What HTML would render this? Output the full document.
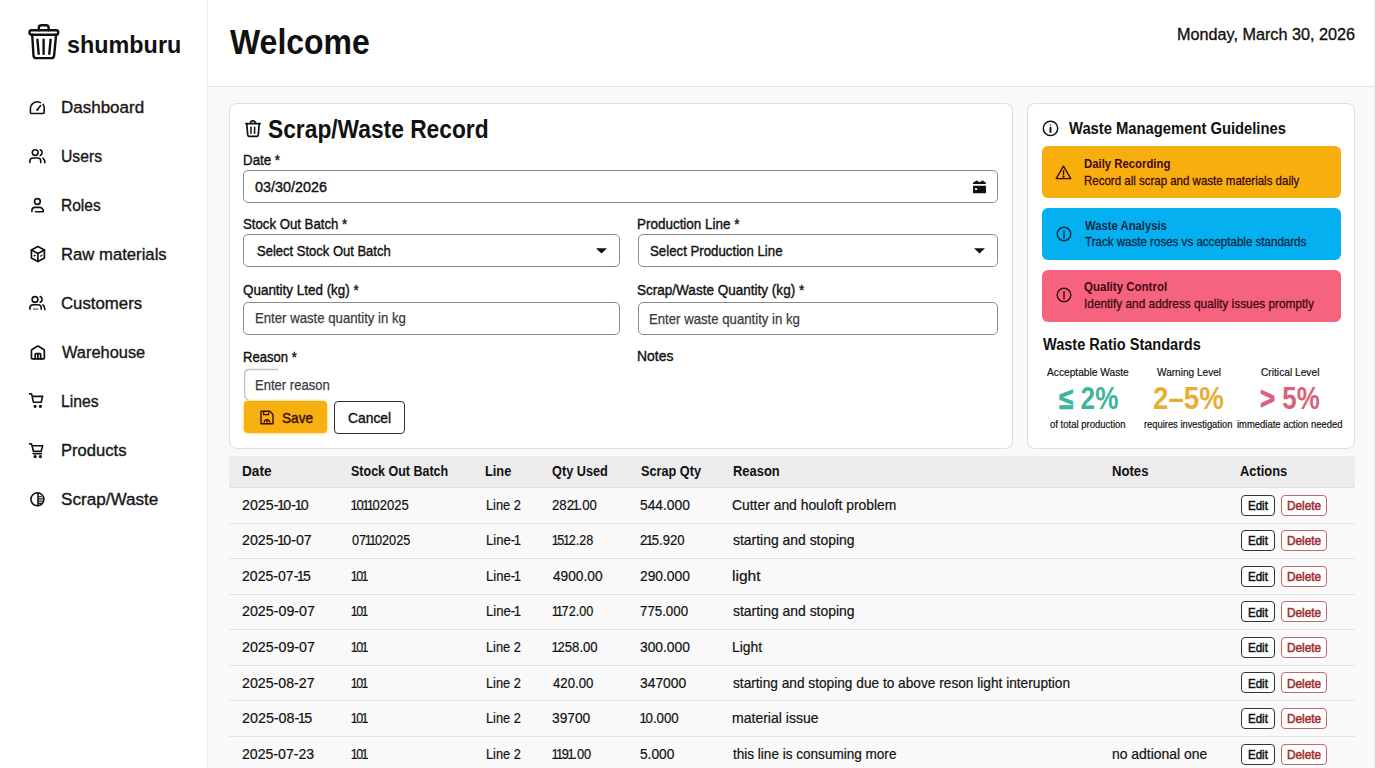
<!DOCTYPE html>
<html><head><meta charset="utf-8">
<style>
*{box-sizing:border-box;margin:0;padding:0}
html,body{width:1375px;height:768px;overflow:hidden;background:#f9f9f9;font-family:"Liberation Sans",sans-serif;color:#111}
.t{position:absolute;white-space:nowrap;line-height:1}
.ic{position:absolute}
#side{position:absolute;left:0;top:0;width:208px;height:768px;background:#fff;border-right:1px solid #ebebeb}
#head{position:absolute;left:208px;top:0;width:1167px;height:87px;background:#fff;border-bottom:1px solid #e5e5e5;border-right:1px solid #e8e8e8}
.card{position:absolute;background:#fff;border:1px solid #dedede;border-radius:8px}
.inp{position:absolute;border:1px solid #8c8c8c;border-radius:5px;background:#fff}
.gbox{position:absolute;left:1042px;width:298.5px;border-radius:6px}
.row{position:absolute;left:229px;width:1126px;height:1px;background:#e0e0e0}
.eb{position:absolute;left:1241px;width:34px;height:21px;border:1.3px solid #333;border-radius:4px;background:#fff}
.db{position:absolute;left:1281px;width:46px;height:21px;border:1.4px solid #bd6a6a;border-radius:4px;background:#fff}
</style></head><body>
<div id="side"></div><div id="head"></div>
<svg class="ic" style="left:27px;top:22px" width="34" height="39" viewBox="0 0 34 39" fill="none" stroke="#111" stroke-width="2.4" stroke-linecap="round" stroke-linejoin="round">
<path d="M11.8 8.2V5.8Q11.8 3.2 14.4 3.2H19Q21.6 3.2 21.6 5.8V8.2"/>
<rect x="2.5" y="8.3" width="28.7" height="4.4" rx="2"/>
<path d="M5.2 12.7L6.5 33.6Q6.7 36.1 9.2 36.1H24.4Q26.9 36.1 27.1 33.6L29.1 12.7"/>
<path d="M10.4 17.6L11.7 31.9M16.6 17.6V31.9M23.6 17.6L22.3 31.9"/>
</svg>
<div class="card" style="left:229px;top:103px;width:784px;height:345.8px"></div>
<div class="card" style="left:1027px;top:103px;width:328px;height:345.8px"></div>
<div class="inp" style="left:243px;top:170px;width:755px;height:33px"></div>
<div class="inp" style="left:243px;top:234px;width:377px;height:33px"></div>
<div class="inp" style="left:638px;top:234px;width:360px;height:33px"></div>
<div class="inp" style="left:243px;top:302px;width:377px;height:33px"></div>
<div class="inp" style="left:638px;top:302px;width:360px;height:33px"></div>
<svg class="ic" style="left:240px;top:365px" width="50" height="40" viewBox="0 0 50 40"><path d="M38 4.5H9.5Q4.6 4.5 4.6 9.4V29.6Q4.6 34.2 8.6 34.6" fill="none" stroke="#c2c2c2" stroke-width="1.3"/></svg>
<div style="position:absolute;left:244px;top:401px;width:83px;height:32px;background:#f7b00f;border-radius:4px;box-shadow:0 0 2px 1px rgba(252,220,120,0.8)"></div>
<div style="position:absolute;left:334px;top:401px;width:71px;height:33px;border:1px solid #2e2e2e;border-radius:4px;background:#fff"></div>
<div class="gbox" style="top:146px;height:52px;background:#f8ae0d"></div>
<div class="gbox" style="top:208px;height:51.5px;background:#04b0f0"></div>
<div class="gbox" style="top:270px;height:51.5px;background:#f5637e"></div>
<div style="position:absolute;left:229px;top:456px;width:1126px;height:31px;background:#ececec"></div>
<div class="row" style="top:487px"></div>
<div class="eb" style="top:494.60px"></div><div class="db" style="top:494.60px"></div>
<div class="row" style="top:522.57px"></div>
<div class="eb" style="top:530.17px"></div><div class="db" style="top:530.17px"></div>
<div class="row" style="top:558.14px"></div>
<div class="eb" style="top:565.74px"></div><div class="db" style="top:565.74px"></div>
<div class="row" style="top:593.71px"></div>
<div class="eb" style="top:601.31px"></div><div class="db" style="top:601.31px"></div>
<div class="row" style="top:629.28px"></div>
<div class="eb" style="top:636.88px"></div><div class="db" style="top:636.88px"></div>
<div class="row" style="top:664.85px"></div>
<div class="eb" style="top:672.45px"></div><div class="db" style="top:672.45px"></div>
<div class="row" style="top:700.42px"></div>
<div class="eb" style="top:708.02px"></div><div class="db" style="top:708.02px"></div>
<div class="row" style="top:735.99px"></div>
<div class="eb" style="top:743.59px"></div><div class="db" style="top:743.59px"></div><div style="position:absolute;left:1374px;top:0;width:1px;height:768px;background:#ececec"></div>

<!-- nav icons -->
<svg class="ic" style="left:28px;top:100px" width="19" height="16" viewBox="0 0 19 16" fill="none" stroke="#111" stroke-width="1.6" stroke-linecap="round" stroke-linejoin="round">
<path d="M15.1 4.4A6.9 6.9 0 0 1 16.2 8.6V12.3Q16.2 13.5 15 13.5H3.6Q2.4 13.5 2.4 12.3V8.8A6.9 6.9 0 0 1 12.4 2.6"/><path d="M9.5 9.6L12.7 5.6"/><circle cx="9.4" cy="9.8" r="1.15" fill="#111" stroke="none"/></svg>
<svg class="ic" style="left:28px;top:148px" width="19" height="17" viewBox="0 0 19 17" fill="none" stroke="#111" stroke-width="1.6" stroke-linecap="round" stroke-linejoin="round">
<circle cx="7.2" cy="4.6" r="2.9"/><path d="M1.9 14.6V13.2Q1.9 10 5.1 10H9.6Q12.8 10 12.8 13.2V14.6"/><path d="M12.2 1.8a3 3 0 0 1 0 5.6"/><path d="M15 10.2Q16.8 11.6 16.9 14.8"/></svg>
<svg class="ic" style="left:30px;top:196.5px" width="16" height="17" viewBox="0 0 16 17" fill="none" stroke="#111" stroke-width="1.6" stroke-linecap="round" stroke-linejoin="round">
<circle cx="7.4" cy="4.5" r="2.9"/><path d="M1.9 14.6V13.4Q1.9 10.4 5 10.4H9.8Q12 10.4 13 12.6L13.3 13.4Q13.8 14.8 12.4 14.8H5.6"/></svg>
<svg class="ic" style="left:28.5px;top:244.5px" width="18" height="18" viewBox="0 0 18 18" fill="none" stroke="#111" stroke-width="1.7" stroke-linecap="round" stroke-linejoin="round">
<path d="M8.9 1.6L15.4 5V12.9L8.9 16.4L2.4 12.9V5Z"/><path d="M2.4 5L8.9 8.6L15.4 5M8.9 8.6V16.4"/><circle cx="5.6" cy="10.6" r="0.6" fill="#111" stroke-width="0.8"/><path d="M11.6 11.2l1.4-1" stroke-width="1.2"/></svg>
<svg class="ic" style="left:28px;top:294.5px" width="19" height="17" viewBox="0 0 19 17" fill="none" stroke="#111" stroke-width="1.6" stroke-linecap="round" stroke-linejoin="round">
<circle cx="7" cy="4.5" r="2.9"/><path d="M1.9 14.3V12.9Q1.9 9.7 5.2 9.7H9.8Q13.2 9.7 13.2 12.9V14.3"/><path d="M5 14.1H10.2" stroke="#777" stroke-width="1.5" stroke-linecap="butt"/><path d="M12.2 1.6a3 3 0 0 1 0 5.6"/><path d="M15 9.9Q16.8 11.4 16.9 14.6"/></svg>
<svg class="ic" style="left:28.5px;top:343.5px" width="18" height="18" viewBox="0 0 18 18" fill="none" stroke="#111" stroke-width="1.7" stroke-linecap="round" stroke-linejoin="round">
<path d="M2.45 6.6Q2.45 5.9 3.1 5.5L8.3 2.3Q8.9 1.95 9.5 2.3L14.7 5.5Q15.35 5.9 15.35 6.6V13.9Q15.35 14.85 14.4 14.85H3.4Q2.45 14.85 2.45 13.9Z"/><path d="M6.15 14.85V10.3Q6.15 9.55 6.9 9.55H10.9Q11.65 9.55 11.65 10.3V14.85M8.9 9.55V14.85"/></svg>
<svg class="ic" style="left:28px;top:392px" width="17" height="16" viewBox="0 0 17 16" fill="none" stroke="#111" stroke-width="1.6" stroke-linecap="round" stroke-linejoin="round">
<path d="M1.6 1.9H2.8Q3.6 1.9 3.8 2.7L5.4 10.2H13.2L14.6 4.4H4.2"/><circle cx="7.1" cy="14.3" r="0.8" fill="#111"/><circle cx="12.4" cy="14.3" r="0.8" fill="#111"/></svg>
<svg class="ic" style="left:28px;top:441.5px" width="17" height="17" viewBox="0 0 17 17" fill="none" stroke="#111" stroke-width="1.6" stroke-linecap="round" stroke-linejoin="round">
<path d="M1.6 1.9H2.8Q3.6 1.9 3.8 2.7L5.4 9.3H13.2L14.6 3.7H4.2"/><path d="M5.2 11.6H13.4"/><circle cx="7.1" cy="14.6" r="0.85" fill="#111"/><circle cx="12.4" cy="14.6" r="0.85" fill="#111"/></svg>
<svg class="ic" style="left:28.5px;top:491px" width="17" height="17" viewBox="0 0 17 17" fill="none" stroke="#111" stroke-width="1.6" stroke-linecap="round" stroke-linejoin="round">
<circle cx="8.4" cy="8.3" r="6.5"/><path d="M9 1.9V14.7"/><path d="M9.8 5.6H12.4M9.8 7.3H13.4M9.8 9H13.6M9.8 10.8H13.2M9.8 12.5H12.2" stroke-width="0.9"/></svg>

<!-- title trash -->
<svg class="ic" style="left:244px;top:119px" width="18" height="19" viewBox="0 0 18 19" fill="none" stroke="#111" stroke-width="1.7" stroke-linecap="round" stroke-linejoin="round">
<path d="M6.6 4.2C6.6 2.6 7.6 1.9 9 1.9S11.4 2.6 11.4 4.2"/><path d="M1.8 4.6H16.2"/><path d="M2.8 4.8L3.7 15.8Q3.9 17.4 5.4 17.4H12.6Q14.1 17.4 14.3 15.8L15.2 4.8"/><path d="M7 8.2V14.2M10.6 8.2V14.2" stroke-width="1.5"/></svg>
<!-- calendar -->
<svg class="ic" style="left:973px;top:179.5px" width="13" height="14" viewBox="0 0 13 14">
<circle cx="3.6" cy="1.9" r="1.35" fill="#111"/><circle cx="9.5" cy="1.9" r="1.35" fill="#111"/>
<path d="M0 3.4Q0 1.8 1.6 1.8H11.4Q13 1.8 13 3.4V4H0Z" fill="#111"/>
<path d="M0 5.7H13V12.4Q13 13.3 12.1 13.3H0.9Q0 13.3 0 12.4Z" fill="#111"/><rect x="2" y="8.2" width="2.2" height="1.9" rx="0.4" fill="#fff"/></svg>
<!-- carets -->
<svg class="ic" style="left:595.5px;top:248px" width="11" height="6" viewBox="0 0 11 6"><path d="M0 0.3H11L5.5 5.6Z" fill="#111"/></svg>
<svg class="ic" style="left:974px;top:248px" width="11" height="6" viewBox="0 0 11 6"><path d="M0 0.3H11L5.5 5.6Z" fill="#111"/></svg>
<!-- save icon -->
<svg class="ic" style="left:259.5px;top:409.5px" width="14" height="15" viewBox="0 0 14 15" fill="none" stroke="#3d0a10" stroke-width="1.4" stroke-linejoin="round">
<path d="M1 1.2H9.8L13 4.4V13.8H1Z"/><path d="M3.6 1.2V4.6H8.6V2.6"/><path d="M4.2 12.6A2.8 2.8 0 1 1 9.8 12.6"/><path d="M7 10.4V12.8"/></svg>
<!-- info icon card 2 -->
<svg class="ic" style="left:1042px;top:120px" width="17" height="17" viewBox="0 0 17 17" fill="none" stroke="#111" stroke-width="1.5" stroke-linecap="round">
<circle cx="8.5" cy="8.4" r="7.2"/><path d="M8.5 7.6V12" stroke-width="1.9"/><circle cx="8.5" cy="4.9" r="0.7" fill="#111" stroke="none"/></svg>
<!-- guideline icons -->
<svg class="ic" style="left:1055px;top:165px" width="17" height="15" viewBox="0 0 17 15" fill="none" stroke="#3d0a10" stroke-width="1.4" stroke-linejoin="round" stroke-linecap="round">
<path d="M8.5 1.2L15.8 13.6H1.2Z"/><path d="M8.5 5.6V9.6"/><circle cx="8.5" cy="11.6" r="0.5" fill="#3d0a10"/></svg>
<svg class="ic" style="left:1055.5px;top:226px" width="16" height="16" viewBox="0 0 16 16" fill="none" stroke="#0b2f4a" stroke-width="1.4" stroke-linecap="round">
<circle cx="8" cy="8" r="6.8"/><path d="M8 5V10.5"/><circle cx="8" cy="11.6" r="0.4" fill="#0b2f4a"/></svg>
<svg class="ic" style="left:1055.5px;top:287px" width="16" height="16" viewBox="0 0 16 16" fill="none" stroke="#3d0a10" stroke-width="1.4" stroke-linecap="round">
<circle cx="8" cy="8" r="6.8"/><path d="M8 4.6V9.6"/><circle cx="8" cy="11.3" r="0.4" fill="#3d0a10"/></svg>


<div class="t" style="left:67.03px;top:32.68px;font-size:24px;font-weight:700;color:#111;transform:scaleX(0.9739);transform-origin:0 0;">shumburu</div>
<div class="t" style="left:230.00px;top:24.80px;font-size:34.5px;font-weight:700;color:#111;transform:scaleX(0.9267);transform-origin:0 0;">Welcome</div>
<div class="t" style="left:1177.07px;top:26.27px;font-size:17.4px;font-weight:400;color:#111;transform:scaleX(0.9316);transform-origin:0 0;-webkit-text-stroke-width:0.35px;">Monday, March 30, 2026</div>
<div class="t" style="left:60.99px;top:99.78px;font-size:16.8px;font-weight:400;color:#161616;transform:scaleX(1.0125);transform-origin:0 0;-webkit-text-stroke-width:0.35px;">Dashboard</div>
<div class="t" style="left:61.06px;top:148.78px;font-size:16.8px;font-weight:400;color:#161616;transform:scaleX(0.9372);transform-origin:0 0;-webkit-text-stroke-width:0.35px;">Users</div>
<div class="t" style="left:61.07px;top:197.78px;font-size:16.8px;font-weight:400;color:#161616;transform:scaleX(0.9262);transform-origin:0 0;-webkit-text-stroke-width:0.35px;">Roles</div>
<div class="t" style="left:61.01px;top:246.78px;font-size:16.8px;font-weight:400;color:#161616;transform:scaleX(0.9943);transform-origin:0 0;-webkit-text-stroke-width:0.35px;">Raw materials</div>
<div class="t" style="left:61.00px;top:295.78px;font-size:16.8px;font-weight:400;color:#161616;-webkit-text-stroke-width:0.35px;">Customers</div>
<div class="t" style="left:62.00px;top:344.78px;font-size:16.8px;font-weight:400;color:#161616;transform:scaleX(0.9765);transform-origin:0 0;-webkit-text-stroke-width:0.35px;">Warehouse</div>
<div class="t" style="left:61.06px;top:393.78px;font-size:16.8px;font-weight:400;color:#161616;transform:scaleX(0.9385);transform-origin:0 0;-webkit-text-stroke-width:0.35px;">Lines</div>
<div class="t" style="left:61.01px;top:442.78px;font-size:16.8px;font-weight:400;color:#161616;transform:scaleX(0.9892);transform-origin:0 0;-webkit-text-stroke-width:0.35px;">Products</div>
<div class="t" style="left:60.98px;top:491.78px;font-size:16.8px;font-weight:400;color:#161616;transform:scaleX(1.0202);transform-origin:0 0;-webkit-text-stroke-width:0.35px;">Scrap/Waste</div>
<div class="t" style="left:268.09px;top:116.84px;font-size:25px;font-weight:700;color:#111;transform:scaleX(0.9108);transform-origin:0 0;">Scrap/Waste Record</div>
<div class="t" style="left:243.12px;top:152.13px;font-size:15.2px;font-weight:400;color:#111;transform:scaleX(0.8780);transform-origin:0 0;-webkit-text-stroke-width:0.4px;">Date *</div>
<div class="t" style="left:255.00px;top:178.73px;font-size:15.2px;font-weight:400;color:#111;transform:scaleX(0.9474);transform-origin:0 0;-webkit-text-stroke-width:0.4px;">03/30/2026</div>
<div class="t" style="left:243.13px;top:216.13px;font-size:15.2px;font-weight:400;color:#111;transform:scaleX(0.8689);transform-origin:0 0;-webkit-text-stroke-width:0.4px;">Stock Out Batch *</div>
<div class="t" style="left:257.44px;top:243.13px;font-size:15.2px;font-weight:400;color:#111;transform:scaleX(0.8561);transform-origin:0 0;-webkit-text-stroke-width:0.4px;">Select Stock Out Batch</div>
<div class="t" style="left:637.11px;top:216.13px;font-size:15.2px;font-weight:400;color:#111;transform:scaleX(0.8860);transform-origin:0 0;-webkit-text-stroke-width:0.4px;">Production Line *</div>
<div class="t" style="left:650.13px;top:243.13px;font-size:15.2px;font-weight:400;color:#111;transform:scaleX(0.8722);transform-origin:0 0;-webkit-text-stroke-width:0.4px;">Select Production Line</div>
<div class="t" style="left:243.12px;top:282.13px;font-size:15.2px;font-weight:400;color:#111;transform:scaleX(0.8846);transform-origin:0 0;-webkit-text-stroke-width:0.4px;">Quantity Lted (kg) *</div>
<div class="t" style="left:254.53px;top:310.13px;font-size:15.2px;font-weight:400;color:#3a3a3a;transform:scaleX(0.8680);transform-origin:0 0;-webkit-text-stroke-width:0.25px;">Enter waste quantity in kg</div>
<div class="t" style="left:637.11px;top:282.13px;font-size:15.2px;font-weight:400;color:#111;transform:scaleX(0.8909);transform-origin:0 0;-webkit-text-stroke-width:0.4px;">Scrap/Waste Quantity (kg) *</div>
<div class="t" style="left:648.83px;top:310.63px;font-size:15.2px;font-weight:400;color:#3a3a3a;transform:scaleX(0.8680);transform-origin:0 0;-webkit-text-stroke-width:0.25px;">Enter waste quantity in kg</div>
<div class="t" style="left:243.14px;top:348.83px;font-size:15.2px;font-weight:400;color:#111;transform:scaleX(0.8623);transform-origin:0 0;-webkit-text-stroke-width:0.4px;">Reason *</div>
<div class="t" style="left:637.08px;top:348.33px;font-size:15.2px;font-weight:400;color:#111;transform:scaleX(0.9158);transform-origin:0 0;-webkit-text-stroke-width:0.4px;">Notes</div>
<div class="t" style="left:254.84px;top:376.53px;font-size:15.2px;font-weight:400;color:#3a3a3a;transform:scaleX(0.8600);transform-origin:0 0;-webkit-text-stroke-width:0.25px;">Enter reason</div>
<div class="t" style="left:282.09px;top:409.60px;font-size:15px;font-weight:400;color:#3d0a10;transform:scaleX(0.9091);transform-origin:0 0;-webkit-text-stroke-width:0.4px;">Save</div>
<div class="t" style="left:348.08px;top:409.60px;font-size:15px;font-weight:400;color:#111;transform:scaleX(0.9222);transform-origin:0 0;-webkit-text-stroke-width:0.4px;">Cancel</div>
<div class="t" style="left:1069.40px;top:120.31px;font-size:17px;font-weight:700;color:#111;transform:scaleX(0.8687);transform-origin:0 0;-webkit-text-stroke-width:0px;">Waste Management Guidelines</div>
<div class="t" style="left:1083.63px;top:157.20px;font-size:13px;font-weight:700;color:#3d0a10;transform:scaleX(0.8722);transform-origin:0 0;">Daily Recording</div>
<div class="t" style="left:1083.62px;top:173.50px;font-size:13px;font-weight:400;color:#3d0a10;transform:scaleX(0.8840);transform-origin:0 0;-webkit-text-stroke-width:0.3px;">Record all scrap and waste materials daily</div>
<div class="t" style="left:1084.50px;top:218.80px;font-size:13px;font-weight:700;color:#0b2a45;transform:scaleX(0.8670);transform-origin:0 0;">Waste Analysis</div>
<div class="t" style="left:1084.50px;top:234.80px;font-size:13px;font-weight:400;color:#0b2a45;transform:scaleX(0.8896);transform-origin:0 0;-webkit-text-stroke-width:0.3px;">Track waste roses vs acceptable standards</div>
<div class="t" style="left:1083.61px;top:280.40px;font-size:13px;font-weight:700;color:#3d0a10;transform:scaleX(0.8859);transform-origin:0 0;">Quality Control</div>
<div class="t" style="left:1083.59px;top:296.70px;font-size:13px;font-weight:400;color:#3d0a10;transform:scaleX(0.9116);transform-origin:0 0;-webkit-text-stroke-width:0.3px;">Identify and address quality issues promptly</div>
<div class="t" style="left:1042.70px;top:336.58px;font-size:16.8px;font-weight:700;color:#111;transform:scaleX(0.8663);transform-origin:0 0;">Waste Ratio Standards</div>
<div class="t" style="left:1047.20px;top:366.63px;font-size:11.3px;font-weight:400;color:#111;transform:scaleX(0.9022);transform-origin:0 0;-webkit-text-stroke-width:0.2px;">Acceptable Waste</div>
<div class="t" style="left:1156.60px;top:366.63px;font-size:11.3px;font-weight:400;color:#111;transform:scaleX(0.8930);transform-origin:0 0;-webkit-text-stroke-width:0.2px;">Warning Level</div>
<div class="t" style="left:1260.60px;top:366.63px;font-size:11.3px;font-weight:400;color:#111;transform:scaleX(0.9031);transform-origin:0 0;-webkit-text-stroke-width:0.2px;">Critical Level</div>
<div class="t" style="left:1058.50px;top:383.38px;font-size:30.5px;font-weight:700;color:#3fb39b;transform:scaleX(0.8565);transform-origin:0 0;"><span style="-webkit-text-stroke-width:0.7px">≤</span> 2%</div>
<div class="t" style="left:1153.29px;top:383.38px;font-size:30.5px;font-weight:700;color:#e8ae32;transform:scaleX(0.9079);transform-origin:0 0;">2–5%</div>
<div class="t" style="left:1259.75px;top:383.38px;font-size:30.5px;font-weight:700;color:#d9627b;transform:scaleX(0.8493);transform-origin:0 0;"><span style="-webkit-text-stroke-width:0.8px">&gt;</span> 5%</div>
<div class="t" style="left:1050.00px;top:419.03px;font-size:10.6px;font-weight:400;color:#111;transform:scaleX(0.8976);transform-origin:0 0;-webkit-text-stroke-width:0.2px;">of total production</div>
<div class="t" style="left:1143.72px;top:419.03px;font-size:10.6px;font-weight:400;color:#111;transform:scaleX(0.8828);transform-origin:0 0;-webkit-text-stroke-width:0.2px;">requires investigation</div>
<div class="t" style="left:1236.51px;top:419.03px;font-size:10.6px;font-weight:400;color:#111;transform:scaleX(0.8906);transform-origin:0 0;-webkit-text-stroke-width:0.2px;">immediate action needed</div>
<div class="t" style="left:241.91px;top:465.32px;font-size:13.8px;font-weight:700;color:#111;transform:scaleX(0.9897);transform-origin:0 0;">Date</div>
<div class="t" style="left:351.09px;top:465.32px;font-size:13.8px;font-weight:700;color:#111;transform:scaleX(0.9057);transform-origin:0 0;">Stock Out Batch</div>
<div class="t" style="left:485.27px;top:465.32px;font-size:13.8px;font-weight:700;color:#111;transform:scaleX(0.9259);transform-origin:0 0;">Line</div>
<div class="t" style="left:552.08px;top:465.32px;font-size:13.8px;font-weight:700;color:#111;transform:scaleX(0.9220);transform-origin:0 0;">Qty Used</div>
<div class="t" style="left:640.88px;top:465.32px;font-size:13.8px;font-weight:700;color:#111;transform:scaleX(0.9203);transform-origin:0 0;">Scrap Qty</div>
<div class="t" style="left:732.56px;top:465.32px;font-size:13.8px;font-weight:700;color:#111;transform:scaleX(0.9375);transform-origin:0 0;">Reason</div>
<div class="t" style="left:1111.85px;top:465.32px;font-size:13.8px;font-weight:700;color:#111;transform:scaleX(0.9514);transform-origin:0 0;">Notes</div>
<div class="t" style="left:1240.37px;top:465.32px;font-size:13.8px;font-weight:700;color:#111;transform:scaleX(0.9327);transform-origin:0 0;">Actions</div>
<div class="t" style="left:241.54px;top:497.77px;font-size:14.8px;font-weight:400;color:#111;transform:scaleX(0.9618);transform-origin:0 0;-webkit-text-stroke-width:0.2px;">2025-<span style="margin-left:-1.6px;letter-spacing:-1.6px">1</span>0-<span style="margin-left:-1.6px;letter-spacing:-1.6px">1</span>0</div>
<div class="t" style="left:352.00px;top:497.77px;font-size:14.8px;font-weight:400;color:#111;transform:scaleX(0.8797);transform-origin:0 0;-webkit-text-stroke-width:0.2px;"><span style="margin-left:-1.6px;letter-spacing:-1.6px">1</span>0<span style="margin-left:-1.6px;letter-spacing:-1.6px">1</span><span style="margin-left:-1.6px;letter-spacing:-1.6px">1</span>02025</div>
<div class="t" style="left:485.64px;top:497.77px;font-size:14.8px;font-weight:400;color:#111;transform:scaleX(0.8641);transform-origin:0 0;-webkit-text-stroke-width:0.2px;">Line 2</div>
<div class="t" style="left:552.11px;top:497.77px;font-size:14.8px;font-weight:400;color:#111;transform:scaleX(0.8918);transform-origin:0 0;-webkit-text-stroke-width:0.2px;">282<span style="margin-left:-1.6px;letter-spacing:-1.6px">1</span>.00</div>
<div class="t" style="left:640.37px;top:497.77px;font-size:14.8px;font-weight:400;color:#111;transform:scaleX(0.9327);transform-origin:0 0;-webkit-text-stroke-width:0.2px;">544.000</div>
<div class="t" style="left:732.06px;top:497.77px;font-size:14.8px;font-weight:400;color:#111;transform:scaleX(0.9382);transform-origin:0 0;-webkit-text-stroke-width:0.2px;">Cutter and houloft problem</div>
<div class="t" style="left:1247.56px;top:499.79px;font-size:12.3px;font-weight:400;color:#111;transform:scaleX(0.9381);transform-origin:0 0;-webkit-text-stroke-width:0.5px;">Edit</div>
<div class="t" style="left:1286.94px;top:499.79px;font-size:12.3px;font-weight:400;color:#9e2c2c;transform:scaleX(0.9618);transform-origin:0 0;-webkit-text-stroke-width:0.5px;">Delete</div>
<div class="t" style="left:241.54px;top:533.34px;font-size:14.8px;font-weight:400;color:#111;transform:scaleX(0.9620);transform-origin:0 0;-webkit-text-stroke-width:0.2px;">2025-<span style="margin-left:-1.6px;letter-spacing:-1.6px">1</span>0-07</div>
<div class="t" style="left:352.00px;top:533.34px;font-size:14.8px;font-weight:400;color:#111;transform:scaleX(0.8627);transform-origin:0 0;-webkit-text-stroke-width:0.2px;">07<span style="margin-left:-1.6px;letter-spacing:-1.6px">1</span><span style="margin-left:-1.6px;letter-spacing:-1.6px">1</span>02025</div>
<div class="t" style="left:485.61px;top:533.34px;font-size:14.8px;font-weight:400;color:#111;transform:scaleX(0.8868);transform-origin:0 0;-webkit-text-stroke-width:0.2px;">Line-<span style="margin-left:-1.6px;letter-spacing:-1.6px">1</span></div>
<div class="t" style="left:553.00px;top:533.34px;font-size:14.8px;font-weight:400;color:#111;transform:scaleX(0.8532);transform-origin:0 0;-webkit-text-stroke-width:0.2px;"><span style="margin-left:-1.6px;letter-spacing:-1.6px">1</span>5<span style="margin-left:-1.6px;letter-spacing:-1.6px">1</span>2.28</div>
<div class="t" style="left:640.41px;top:533.34px;font-size:14.8px;font-weight:400;color:#111;transform:scaleX(0.8857);transform-origin:0 0;-webkit-text-stroke-width:0.2px;">2<span style="margin-left:-1.6px;letter-spacing:-1.6px">1</span>5.920</div>
<div class="t" style="left:733.00px;top:533.34px;font-size:14.8px;font-weight:400;color:#111;transform:scaleX(0.9411);transform-origin:0 0;-webkit-text-stroke-width:0.2px;">starting and stoping</div>
<div class="t" style="left:1247.56px;top:535.36px;font-size:12.3px;font-weight:400;color:#111;transform:scaleX(0.9381);transform-origin:0 0;-webkit-text-stroke-width:0.5px;">Edit</div>
<div class="t" style="left:1286.94px;top:535.36px;font-size:12.3px;font-weight:400;color:#9e2c2c;transform:scaleX(0.9618);transform-origin:0 0;-webkit-text-stroke-width:0.5px;">Delete</div>
<div class="t" style="left:241.55px;top:568.91px;font-size:14.8px;font-weight:400;color:#111;transform:scaleX(0.9507);transform-origin:0 0;-webkit-text-stroke-width:0.2px;">2025-07-<span style="margin-left:-1.6px;letter-spacing:-1.6px">1</span>5</div>
<div class="t" style="left:352.00px;top:568.91px;font-size:14.8px;font-weight:400;color:#111;transform:scaleX(0.8400);transform-origin:0 0;letter-spacing:-0.238px;-webkit-text-stroke-width:0.2px;"><span style="margin-left:-1.6px;letter-spacing:-1.6px">1</span>0<span style="margin-left:-1.6px;letter-spacing:-1.6px">1</span></div>
<div class="t" style="left:485.61px;top:568.91px;font-size:14.8px;font-weight:400;color:#111;transform:scaleX(0.8868);transform-origin:0 0;-webkit-text-stroke-width:0.2px;">Line-<span style="margin-left:-1.6px;letter-spacing:-1.6px">1</span></div>
<div class="t" style="left:553.00px;top:568.91px;font-size:14.8px;font-weight:400;color:#111;transform:scaleX(0.9264);transform-origin:0 0;-webkit-text-stroke-width:0.2px;">4900.00</div>
<div class="t" style="left:640.37px;top:568.91px;font-size:14.8px;font-weight:400;color:#111;transform:scaleX(0.9327);transform-origin:0 0;-webkit-text-stroke-width:0.2px;">290.000</div>
<div class="t" style="left:731.95px;top:568.91px;font-size:14.8px;font-weight:400;color:#111;transform:scaleX(1.0538);transform-origin:0 0;-webkit-text-stroke-width:0.2px;">light</div>
<div class="t" style="left:1247.56px;top:570.93px;font-size:12.3px;font-weight:400;color:#111;transform:scaleX(0.9381);transform-origin:0 0;-webkit-text-stroke-width:0.5px;">Edit</div>
<div class="t" style="left:1286.94px;top:570.93px;font-size:12.3px;font-weight:400;color:#9e2c2c;transform:scaleX(0.9618);transform-origin:0 0;-webkit-text-stroke-width:0.5px;">Delete</div>
<div class="t" style="left:241.54px;top:604.48px;font-size:14.8px;font-weight:400;color:#111;transform:scaleX(0.9635);transform-origin:0 0;-webkit-text-stroke-width:0.2px;">2025-09-07</div>
<div class="t" style="left:352.00px;top:604.48px;font-size:14.8px;font-weight:400;color:#111;transform:scaleX(0.8400);transform-origin:0 0;letter-spacing:-0.238px;-webkit-text-stroke-width:0.2px;"><span style="margin-left:-1.6px;letter-spacing:-1.6px">1</span>0<span style="margin-left:-1.6px;letter-spacing:-1.6px">1</span></div>
<div class="t" style="left:485.61px;top:604.48px;font-size:14.8px;font-weight:400;color:#111;transform:scaleX(0.8868);transform-origin:0 0;-webkit-text-stroke-width:0.2px;">Line-<span style="margin-left:-1.6px;letter-spacing:-1.6px">1</span></div>
<div class="t" style="left:553.00px;top:604.48px;font-size:14.8px;font-weight:400;color:#111;transform:scaleX(0.8532);transform-origin:0 0;-webkit-text-stroke-width:0.2px;"><span style="margin-left:-1.6px;letter-spacing:-1.6px">1</span><span style="margin-left:-1.6px;letter-spacing:-1.6px">1</span>72.00</div>
<div class="t" style="left:640.40px;top:604.48px;font-size:14.8px;font-weight:400;color:#111;transform:scaleX(0.8981);transform-origin:0 0;-webkit-text-stroke-width:0.2px;">775.000</div>
<div class="t" style="left:733.00px;top:604.48px;font-size:14.8px;font-weight:400;color:#111;transform:scaleX(0.9411);transform-origin:0 0;-webkit-text-stroke-width:0.2px;">starting and stoping</div>
<div class="t" style="left:1247.56px;top:606.50px;font-size:12.3px;font-weight:400;color:#111;transform:scaleX(0.9381);transform-origin:0 0;-webkit-text-stroke-width:0.5px;">Edit</div>
<div class="t" style="left:1286.94px;top:606.50px;font-size:12.3px;font-weight:400;color:#9e2c2c;transform:scaleX(0.9618);transform-origin:0 0;-webkit-text-stroke-width:0.5px;">Delete</div>
<div class="t" style="left:241.54px;top:640.05px;font-size:14.8px;font-weight:400;color:#111;transform:scaleX(0.9635);transform-origin:0 0;-webkit-text-stroke-width:0.2px;">2025-09-07</div>
<div class="t" style="left:352.00px;top:640.05px;font-size:14.8px;font-weight:400;color:#111;transform:scaleX(0.8400);transform-origin:0 0;letter-spacing:-0.238px;-webkit-text-stroke-width:0.2px;"><span style="margin-left:-1.6px;letter-spacing:-1.6px">1</span>0<span style="margin-left:-1.6px;letter-spacing:-1.6px">1</span></div>
<div class="t" style="left:485.64px;top:640.05px;font-size:14.8px;font-weight:400;color:#111;transform:scaleX(0.8641);transform-origin:0 0;-webkit-text-stroke-width:0.2px;">Line 2</div>
<div class="t" style="left:553.00px;top:640.05px;font-size:14.8px;font-weight:400;color:#111;transform:scaleX(0.8880);transform-origin:0 0;-webkit-text-stroke-width:0.2px;"><span style="margin-left:-1.6px;letter-spacing:-1.6px">1</span>258.00</div>
<div class="t" style="left:640.37px;top:640.05px;font-size:14.8px;font-weight:400;color:#111;transform:scaleX(0.9327);transform-origin:0 0;-webkit-text-stroke-width:0.2px;">300.000</div>
<div class="t" style="left:732.06px;top:640.05px;font-size:14.8px;font-weight:400;color:#111;transform:scaleX(0.9419);transform-origin:0 0;-webkit-text-stroke-width:0.2px;">Light</div>
<div class="t" style="left:1247.56px;top:642.07px;font-size:12.3px;font-weight:400;color:#111;transform:scaleX(0.9381);transform-origin:0 0;-webkit-text-stroke-width:0.5px;">Edit</div>
<div class="t" style="left:1286.94px;top:642.07px;font-size:12.3px;font-weight:400;color:#9e2c2c;transform:scaleX(0.9618);transform-origin:0 0;-webkit-text-stroke-width:0.5px;">Delete</div>
<div class="t" style="left:241.54px;top:675.62px;font-size:14.8px;font-weight:400;color:#111;transform:scaleX(0.9581);transform-origin:0 0;-webkit-text-stroke-width:0.2px;">2025-08-27</div>
<div class="t" style="left:352.00px;top:675.62px;font-size:14.8px;font-weight:400;color:#111;transform:scaleX(0.8400);transform-origin:0 0;letter-spacing:-0.238px;-webkit-text-stroke-width:0.2px;"><span style="margin-left:-1.6px;letter-spacing:-1.6px">1</span>0<span style="margin-left:-1.6px;letter-spacing:-1.6px">1</span></div>
<div class="t" style="left:485.64px;top:675.62px;font-size:14.8px;font-weight:400;color:#111;transform:scaleX(0.8641);transform-origin:0 0;-webkit-text-stroke-width:0.2px;">Line 2</div>
<div class="t" style="left:553.00px;top:675.62px;font-size:14.8px;font-weight:400;color:#111;transform:scaleX(0.8911);transform-origin:0 0;-webkit-text-stroke-width:0.2px;">420.00</div>
<div class="t" style="left:640.36px;top:675.62px;font-size:14.8px;font-weight:400;color:#111;transform:scaleX(0.9354);transform-origin:0 0;-webkit-text-stroke-width:0.2px;">347000</div>
<div class="t" style="left:733.00px;top:675.62px;font-size:14.8px;font-weight:400;color:#111;transform:scaleX(0.9250);transform-origin:0 0;-webkit-text-stroke-width:0.2px;">starting and stoping due to above reson light interuption</div>
<div class="t" style="left:1247.56px;top:677.64px;font-size:12.3px;font-weight:400;color:#111;transform:scaleX(0.9381);transform-origin:0 0;-webkit-text-stroke-width:0.5px;">Edit</div>
<div class="t" style="left:1286.94px;top:677.64px;font-size:12.3px;font-weight:400;color:#9e2c2c;transform:scaleX(0.9618);transform-origin:0 0;-webkit-text-stroke-width:0.5px;">Delete</div>
<div class="t" style="left:241.53px;top:711.19px;font-size:14.8px;font-weight:400;color:#111;transform:scaleX(0.9676);transform-origin:0 0;-webkit-text-stroke-width:0.2px;">2025-08-<span style="margin-left:-1.6px;letter-spacing:-1.6px">1</span>5</div>
<div class="t" style="left:352.00px;top:711.19px;font-size:14.8px;font-weight:400;color:#111;transform:scaleX(0.8400);transform-origin:0 0;letter-spacing:-0.238px;-webkit-text-stroke-width:0.2px;"><span style="margin-left:-1.6px;letter-spacing:-1.6px">1</span>0<span style="margin-left:-1.6px;letter-spacing:-1.6px">1</span></div>
<div class="t" style="left:485.64px;top:711.19px;font-size:14.8px;font-weight:400;color:#111;transform:scaleX(0.8641);transform-origin:0 0;-webkit-text-stroke-width:0.2px;">Line 2</div>
<div class="t" style="left:552.07px;top:711.19px;font-size:14.8px;font-weight:400;color:#111;transform:scaleX(0.9300);transform-origin:0 0;-webkit-text-stroke-width:0.2px;">39700</div>
<div class="t" style="left:641.30px;top:711.19px;font-size:14.8px;font-weight:400;color:#111;transform:scaleX(0.8952);transform-origin:0 0;-webkit-text-stroke-width:0.2px;"><span style="margin-left:-1.6px;letter-spacing:-1.6px">1</span>0.000</div>
<div class="t" style="left:732.05px;top:711.19px;font-size:14.8px;font-weight:400;color:#111;transform:scaleX(0.9478);transform-origin:0 0;-webkit-text-stroke-width:0.2px;">material issue</div>
<div class="t" style="left:1247.56px;top:713.21px;font-size:12.3px;font-weight:400;color:#111;transform:scaleX(0.9381);transform-origin:0 0;-webkit-text-stroke-width:0.5px;">Edit</div>
<div class="t" style="left:1286.94px;top:713.21px;font-size:12.3px;font-weight:400;color:#9e2c2c;transform:scaleX(0.9618);transform-origin:0 0;-webkit-text-stroke-width:0.5px;">Delete</div>
<div class="t" style="left:241.55px;top:746.76px;font-size:14.8px;font-weight:400;color:#111;transform:scaleX(0.9527);transform-origin:0 0;-webkit-text-stroke-width:0.2px;">2025-07-23</div>
<div class="t" style="left:352.00px;top:746.76px;font-size:14.8px;font-weight:400;color:#111;transform:scaleX(0.8400);transform-origin:0 0;letter-spacing:-0.238px;-webkit-text-stroke-width:0.2px;"><span style="margin-left:-1.6px;letter-spacing:-1.6px">1</span>0<span style="margin-left:-1.6px;letter-spacing:-1.6px">1</span></div>
<div class="t" style="left:485.64px;top:746.76px;font-size:14.8px;font-weight:400;color:#111;transform:scaleX(0.8641);transform-origin:0 0;-webkit-text-stroke-width:0.2px;">Line 2</div>
<div class="t" style="left:553.00px;top:746.76px;font-size:14.8px;font-weight:400;color:#111;transform:scaleX(0.8705);transform-origin:0 0;-webkit-text-stroke-width:0.2px;"><span style="margin-left:-1.6px;letter-spacing:-1.6px">1</span><span style="margin-left:-1.6px;letter-spacing:-1.6px">1</span>9<span style="margin-left:-1.6px;letter-spacing:-1.6px">1</span>.00</div>
<div class="t" style="left:640.38px;top:746.76px;font-size:14.8px;font-weight:400;color:#111;transform:scaleX(0.9250);transform-origin:0 0;-webkit-text-stroke-width:0.2px;">5.000</div>
<div class="t" style="left:733.00px;top:746.76px;font-size:14.8px;font-weight:400;color:#111;transform:scaleX(0.9157);transform-origin:0 0;-webkit-text-stroke-width:0.2px;">this line is consuming more</div>
<div class="t" style="left:1112.06px;top:746.76px;font-size:14.8px;font-weight:400;color:#111;transform:scaleX(0.9400);transform-origin:0 0;-webkit-text-stroke-width:0.2px;">no adtional one</div>
<div class="t" style="left:1247.56px;top:748.78px;font-size:12.3px;font-weight:400;color:#111;transform:scaleX(0.9381);transform-origin:0 0;-webkit-text-stroke-width:0.5px;">Edit</div>
<div class="t" style="left:1286.94px;top:748.78px;font-size:12.3px;font-weight:400;color:#9e2c2c;transform:scaleX(0.9618);transform-origin:0 0;-webkit-text-stroke-width:0.5px;">Delete</div>
</body></html>
